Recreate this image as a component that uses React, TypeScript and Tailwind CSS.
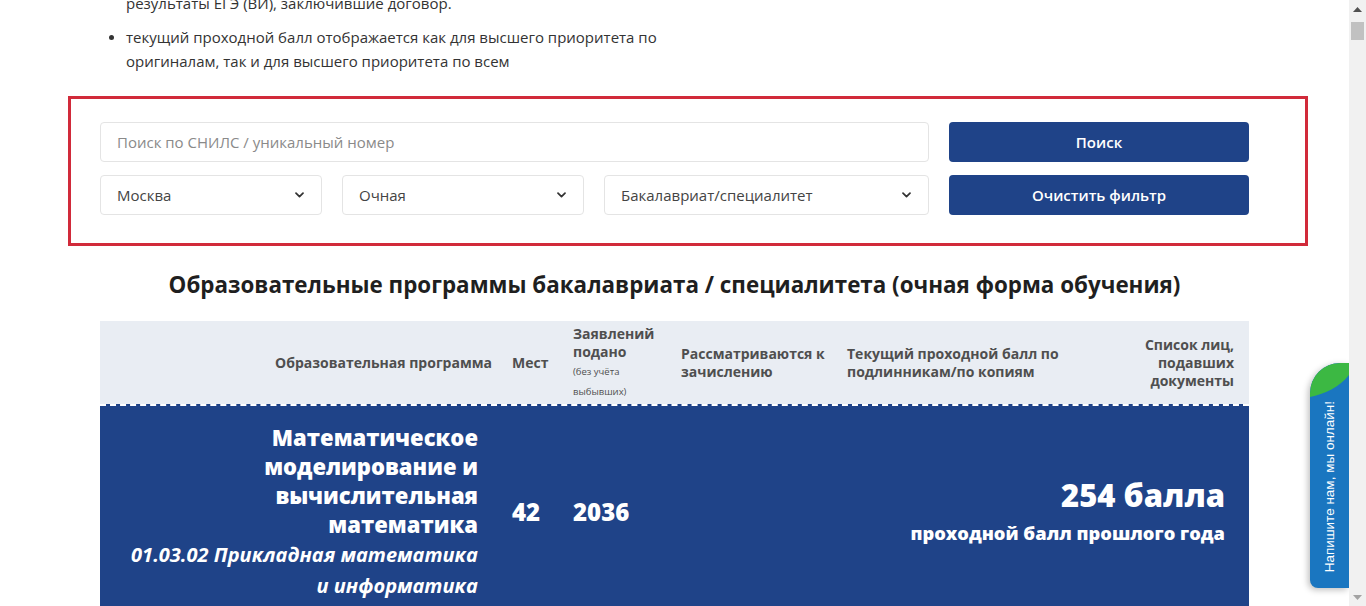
import React from "react";

function Chevron() {
  return (
    <svg width="9" height="6" viewBox="0 0 9 6" fill="none">
      <path d="M1 1.2l3.5 3.5L8 1.2" stroke="#333" strokeWidth="1.7" strokeLinecap="round" strokeLinejoin="round" />
    </svg>
  );
}

function Select({ label, w }: { label: string; w: string }) {
  return (
    <div className={`flex h-10 items-center justify-between rounded border border-[#e4e4e4] pl-4 pr-[17px] text-[15px] text-[#444] ${w}`}>
      <span>{label}</span>
      <Chevron />
    </div>
  );
}

function Scrollbar() {
  return (
    <div className="flex h-full w-[17px] flex-col items-center bg-[#f1f1f1]">
      <svg className="mt-[7px]" width="9" height="5" viewBox="0 0 9 5">
        <path d="M0 5L4.5 0 9 5z" fill="#505050" />
      </svg>
      <div className="mt-[10px] h-[18px] w-[13px] bg-[#c1c1c1]" />
      <div className="flex-1" />
      <svg className="mb-[6px]" width="9" height="5" viewBox="0 0 9 5">
        <path d="M0 0L4.5 5 9 0z" fill="#a3a3a3" />
      </svg>
    </div>
  );
}

function ChatTab() {
  return (
    <div className="absolute right-0 top-[363px] h-[225px] w-[39px] overflow-hidden rounded-bl-lg rounded-tl-[30px] bg-[#1a76c0] shadow-[-2px_2px_6px_rgba(0,0,0,0.25)]">
      <svg className="absolute left-0 top-0" width="39" height="34" viewBox="0 0 39 34">
        <path d="M0 34V30C0 13 13 0 30 0H39V12C30 24 14 31 0 34Z" fill="#3cb843" />
      </svg>
      <div className="flex h-full items-end justify-center pb-[16px]">
        <span className="rotate-180 font-['Liberation_Sans',sans-serif] text-[13.5px] leading-none text-white [writing-mode:vertical-rl]">
          Напишите нам, мы онлайн!
        </span>
      </div>
    </div>
  );
}

export default function App() {
  return (
    <div className="flex h-[606px] w-[1366px] overflow-hidden bg-white font-['Open_Sans',sans-serif]">
      <div className="relative flex-1 overflow-hidden">
        {/* tail of the notes list above */}
        <div className="-mt-[9px] text-[15px] leading-6 text-[#333]">
          <p className="pl-[126px]">результаты ЕГЭ (ВИ), заключившие договор.</p>
          <div className="mt-[10px] flex pl-[109px]">
            <span className="mt-[10px] h-[5px] w-[5px] shrink-0 rounded-full bg-[#333]" />
            <p className="ml-3">
              текущий проходной балл отображается как для высшего приоритета по
              <br />
              оригиналам, так и для высшего приоритета по всем
            </p>
          </div>
        </div>

        {/* filter */}
        <div className="ml-[68px] mt-[23px] h-[150px] w-[1240px] border-[3px] border-[#d12a3a] pl-[29px] pt-[23px]">
          <div className="flex w-[1149px] gap-5">
            <div className="flex w-[829px] flex-col gap-[13px]">
              <input
                className="h-10 rounded border border-[#e4e4e4] px-4 text-[15px] text-[#444] outline-none placeholder:text-[#8a8a8a]"
                placeholder="Поиск по СНИЛС / уникальный номер"
              />
              <div className="flex gap-5">
                <Select label="Москва" w="w-[222px]" />
                <Select label="Очная" w="w-[242px]" />
                <Select label="Бакалавриат/специалитет" w="w-[325px]" />
              </div>
            </div>
            <div className="flex w-[300px] flex-col gap-[13px]">
              <button className="h-10 rounded bg-[#1f4388] text-[15px] font-semibold text-white">Поиск</button>
              <button className="h-10 rounded bg-[#1f4388] text-[15px] font-semibold text-white">Очистить фильтр</button>
            </div>
          </div>
        </div>

        <h2 className="mt-[23px] text-center text-[22.4px] font-bold leading-8 text-[#1f1f1f]">
          Образовательные программы бакалавриата / специалитета (очная форма обучения)
        </h2>

        {/* table */}
        <div className="mx-auto mt-5 w-[1149px]">
          <div className="grid h-[83px] grid-cols-[400px_61px_108px_166px_235px_179px] items-center bg-[#e9edf3] text-[14px] font-bold leading-[18px] text-[#4f4f4f]">
            <div className="pr-2 text-right">Образовательная программа</div>
            <div className="pl-3">Мест</div>
            <div className="pl-3">
              Заявлений
              <br />
              подано
              <br />
              <span className="text-[9.5px] font-normal">
                (без учёта
                <br />
                выбывших)
              </span>
            </div>
            <div className="pl-3">
              Рассматриваются к
              <br />
              зачислению
            </div>
            <div className="pl-3">
              Текущий проходной балл по
              <br />
              подлинникам/по копиям
            </div>
            <div className="pr-[15px] text-right">
              Список лиц,
              <br />
              подавших
              <br />
              документы
            </div>
          </div>

          <div className="grid grid-cols-[400px_61px_108px_166px_235px_179px] items-center border-t-2 border-dashed border-white bg-[#1f4388] pb-5 pt-[17px] text-white">
            <div className="pr-[22px] text-right">
              <div className="text-[22px] font-extrabold leading-[29px]">
                Математическое
                <br />
                моделирование и
                <br />
                вычислительная
                <br />
                математика
              </div>
              <div className="text-[20px] font-bold italic leading-[31px]">
                01.03.02 Прикладная математика
                <br />
                и информатика
              </div>
            </div>
            <div className="pl-3 text-[24px] font-extrabold leading-7">42</div>
            <div className="pl-3 text-[24px] font-extrabold leading-7">2036</div>
            <div className="col-span-3 pr-6 text-right">
              <div className="text-[31px] font-extrabold leading-[38px]">254 балла</div>
              <div className="mt-[3px] text-[18.3px] font-extrabold leading-8">проходной балл прошлого года</div>
            </div>
          </div>
        </div>

        <ChatTab />
      </div>
      <Scrollbar />
    </div>
  );
}
